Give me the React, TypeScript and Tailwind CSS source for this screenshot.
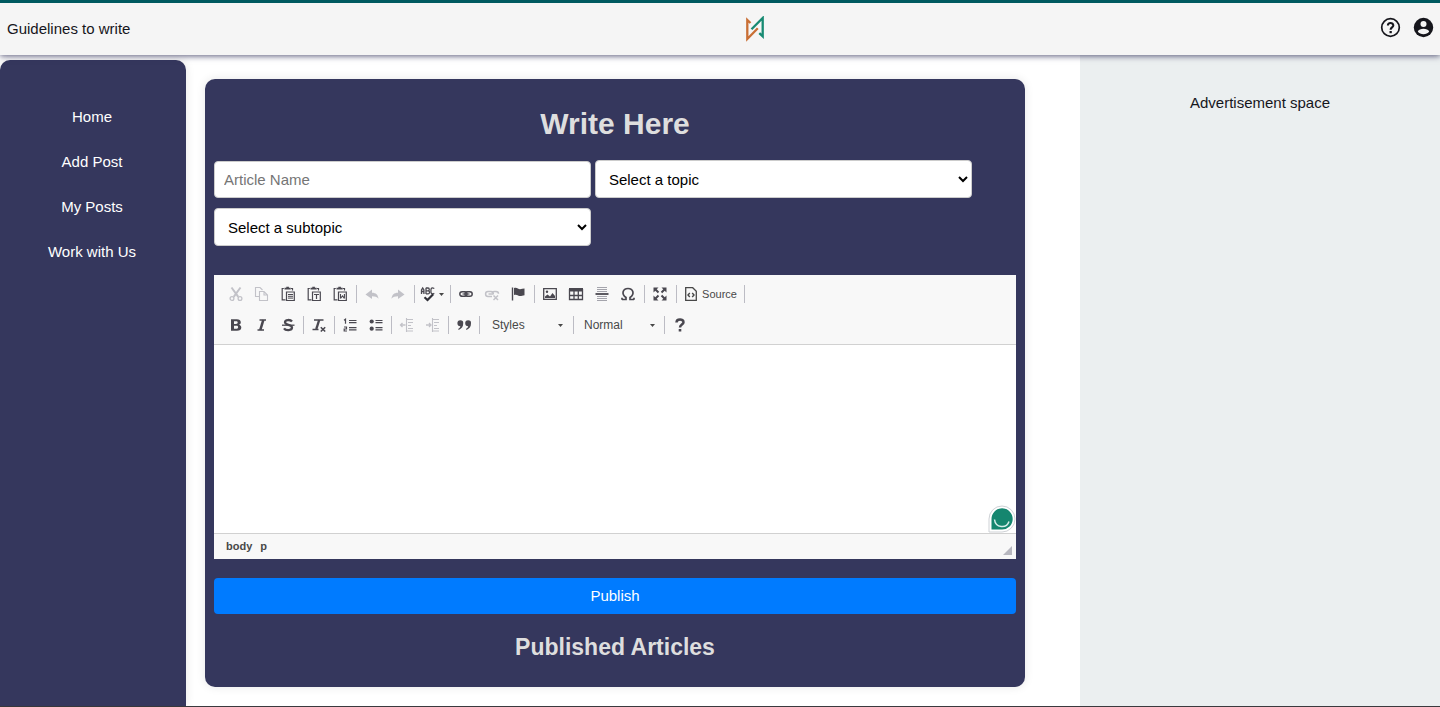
import type { ReactNode } from "react";

const links = ["Home", "Add Post", "My Posts", "Work with Us"];

function Icon({ children }: { children: ReactNode }) {
  return (
    <svg viewBox="0 0 16 16" className="size-4" fill="none" stroke="currentColor" strokeWidth="1.3" aria-hidden="true">
      {children}
    </svg>
  );
}

function Tool({ label, disabled, children }: { label: string; disabled?: boolean; children: ReactNode }) {
  return (
    <button
      type="button"
      aria-label={label}
      disabled={disabled}
      className="flex h-6 w-[26px] items-center justify-center text-[#4a4850] disabled:text-[#c2c2c8]"
    >
      <Icon>{children}</Icon>
    </button>
  );
}

function Sep({ wide }: { wide?: boolean }) {
  return (
    <span className={wide ? "flex w-[6px] justify-center" : "flex w-[5px] justify-center"}>
      <span className="h-[18px] w-px bg-[#bcbcc4]" />
    </span>
  );
}

function Caret() {
  return (
    <svg viewBox="0 0 5 3" className="h-[3px] w-[5px]" fill="#484848" aria-hidden="true">
      <path d="M0 0h5L2.5 3z" />
    </svg>
  );
}

function Clipboard({ children }: { children: ReactNode }) {
  return (
    <>
      <path d="M3.800 2.500H2.200v11.300H5.500M11 2.500h1.500V4.500" strokeWidth="1.200" />
      <path d="M4.500 3.600V1.800h1.800V.8h2.600v1h1.800v1.800z" fill="currentColor" stroke="none" />
      <path d="M6.500 6h7.800v8.500H6.500z" strokeWidth="1.200" />
      {children}
    </>
  );
}

function IndentLines() {
  return <path d="M7 2.500h7M9 5.500h5M9 8.500h3M9 11.500h5M7 14h7M7.500 1v14" strokeWidth="1.100" />;
}

function Toolbar() {
  return (
    <div className="flex flex-col gap-[7px] border-b border-[#d1d1d1] bg-[#f8f8f8] px-[9px] pt-[7px] pb-[7px]">
      <div className="flex items-center">
        <Tool label="Cut" disabled>
          <path d="M3.500 1.500l6.800 9.300M12.500 1.500L5.700 10.800" strokeWidth="2" />
          <circle cx="4" cy="12.500" r="1.900" />
          <circle cx="12" cy="12.500" r="1.900" />
        </Tool>
        <Tool label="Copy" disabled>
          <path d="M5 10.500H1.500v-9h4.500l2.500 2.500" strokeWidth="1.100" />
          <path d="M5.500 5.500h4.500l3.500 3.500v5.500H5.500z M10 5.500V9H13.500" strokeWidth="1.100" />
        </Tool>
        <Tool label="Paste">
          <Clipboard>
            <path d="M8 8.500h5M8 10.300h5M8 12.100h5" strokeWidth="1" />
          </Clipboard>
        </Tool>
        <Tool label="Paste as plain text">
          <Clipboard>
            <path d="M8 8.500h5M10.500 8.500V13" strokeWidth="1.200" />
          </Clipboard>
        </Tool>
        <Tool label="Paste from Word">
          <Clipboard>
            <path d="M8.500 8v4.500M12.400 8v4.500M8.500 12.500l2-2.500 1.900 2.500" strokeWidth="1.100" />
          </Clipboard>
        </Tool>
        <Sep wide />
        <Tool label="Undo" disabled>
          <path d="M1.500 8.500L8 3.500v3.300c4 0 6 2 6.500 6C13 11 11 10.300 8 10.300V13z" fill="currentColor" stroke="none" />
        </Tool>
        <Tool label="Redo" disabled>
          <path d="M14.500 8.500L8 3.500v3.300c-4 0-6 2-6.500 6C3 11 5 10.300 8 10.300V13z" fill="currentColor" stroke="none" />
        </Tool>
        <Sep wide />
        <button
          type="button"
          aria-label="Spell check as you type"
          className="flex h-6 w-[30px] items-center justify-center gap-[3px] text-[#4a4850]"
        >
          <Icon>
            <path d="M1.500 8V4L2.700 2l1.200 2v4M1.500 5.500h2.400M6 1.800V8M6 2h2c1.700 0 1.700 2.800 0 2.800H6h2.200c1.800 0 1.800 3 0 3H6M14.300 2.500c-3-1.500-3.400 0-3.400 2.500s.6 3.700 3.400 2.300" />
            <path d="M4.500 11.300l3 2.700 5.700-5.700" strokeWidth="2.200" stroke="#303038" />
          </Icon>
          <Caret />
        </button>
        <Sep wide />
        <Tool label="Link">
          <rect x="1.800" y="5.700" width="7.200" height="4.600" rx="2.300" strokeWidth="1.500" />
          <rect x="7" y="5.700" width="7.200" height="4.600" rx="2.300" strokeWidth="1.500" />
          <path d="M4.500 8h7" strokeWidth="1.100" />
        </Tool>
        <Tool label="Unlink" disabled>
          <path d="M8 10.500H4C.8 10.500.8 5.500 4 5.500h3c2 0 2.500 1.500 2.200 2.500M8 7c.5-1.200 1.200-1.500 2-1.500h2c1.600 0 2.500 1 2.500 2.300M4.500 8h5" strokeWidth="1.500" />
          <path d="M9.500 9.500l4.500 4.500M14 9.500L9.500 14" strokeWidth="1.500" />
        </Tool>
        <Tool label="Anchor">
          <path d="M2.500 1.500v13" strokeWidth="1.400" />
          <path d="M4 2c3-1.200 4 1.200 6 1.200 1.500 0 3-.7 4.500-.7v6.800c-2 .3-3.500.9-5 .7C7.500 9.700 7 8 4 9z" fill="currentColor" stroke="none" />
        </Tool>
        <Sep wide />
        <Tool label="Image">
          <path d="M1.700 2.700h12.600v10.600H1.700z" strokeWidth="1.300" />
          <path d="M3 12V10.500l2.500-2L8 10.500l2.500-3.500L13 10v2z" fill="currentColor" stroke="none" />
          <circle cx="5" cy="5.800" r="1.200" fill="currentColor" stroke="none" />
        </Tool>
        <Tool label="Table">
          <path d="M1.500 3v10.500h13V3M1.500 9.500h13M6 4v9.500M10.300 4v9.500" />
          <path d="M1 2h14v3.500H1z" fill="currentColor" stroke="none" />
        </Tool>
        <Tool label="Insert horizontal line">
          <path d="M3 1.500h10M3 3.500h10M3 5.500h10M3 10.500h10M3 12.500h10M3 14.500h10" stroke="#a4a4ac" strokeWidth="1" />
          <path d="M1.500 8h13" strokeWidth="1.800" />
        </Tool>
        <Tool label="Insert special character">
          <path d="M2 13.500h4v-2C1 8 2.700 2.500 8 2.500s7 5.500 2 9v2h4M2 13.800v-2M14 13.800v-2" strokeWidth="1.700" />
        </Tool>
        <Sep wide />
        <Tool label="Maximize">
          <path d="M3 3l3.500 3.500M13 3L9.500 6.500M3 13l3.500-3.500M13 13L9.500 9.500" strokeWidth="2" />
          <path d="M1.500 1.500h5l-5 5zM14.500 1.500v5l-5-5zM1.500 14.500v-5l5 5zM14.500 14.500h-5l5-5z" fill="currentColor" stroke="none" />
        </Tool>
        <Sep wide />
        <button type="button" className="flex h-6 w-[62px] items-center justify-center gap-[3px] text-[11px] text-[#484848]">
          <Icon>
            <path d="M2.700 1.700h7l3.600 3.600v9H2.700z" />
            <path d="M6.800 7L5 9l1.800 2M9.200 7L11 9l-1.800 2" strokeWidth="1.400" />
          </Icon>
          Source
        </button>
        <Sep wide />
      </div>
      <div className="flex items-center">
        <Tool label="Bold">
          <path
            d="M3 2.300h5.800c2.500 0 4 1 4 2.900 0 1.300-.8 2.200-2 2.500 1.500.3 2.500 1.300 2.500 2.800 0 2.100-1.700 3.200-4.300 3.200H3zM6 4.300v2.600h2c1.200 0 1.700-.5 1.700-1.300S9.200 4.300 8 4.300zM6 8.800v2.900h2.300c1.300 0 1.800-.6 1.800-1.500s-.6-1.400-1.800-1.400z"
            fill="currentColor"
            fillRule="evenodd"
            stroke="none"
          />
        </Tool>
        <Tool label="Italic">
          <path d="M5.500 3h6.500M3.500 13h6.500" strokeWidth="1.600" />
          <path d="M9.300 3L6.300 13" strokeWidth="2.600" />
        </Tool>
        <Tool label="Strikethrough">
          <path d="M12 4.500C10.500 2.500 5 2.300 5 5.300c0 3 7 2 7 5.200 0 3.300-6.500 3.200-8 .8" strokeWidth="2.300" />
          <path d="M2 8.200h12.500" strokeWidth="1.300" />
        </Tool>
        <Sep />
        <Tool label="Remove format">
          <path d="M3 3h9.500M1.500 12.500h6" strokeWidth="1.600" />
          <path d="M8.200 3L5.300 12" strokeWidth="2.400" />
          <path d="M9.800 10.200l4.400 4.300M14.200 10.200l-4.400 4.300" strokeWidth="1.600" />
        </Tool>
        <Sep />
        <Tool label="Numbered list">
          <path d="M7 3.500h7.500M7 5.700h7.500M7 10.700h7.500M7 12.900h7.500" strokeWidth="1.200" />
          <path d="M2 3.200l1.500-1v4.500M2 10h2.500v2H2.200v2H5" strokeWidth="1.200" />
        </Tool>
        <Tool label="Bulleted list">
          <circle cx="3.700" cy="4.500" r="2.100" fill="currentColor" stroke="none" />
          <circle cx="3.700" cy="11.700" r="2.100" fill="currentColor" stroke="none" />
          <path d="M7.500 3.500h7M7.500 5.700h7M7.500 10.700h7M7.500 12.900h7" strokeWidth="1.200" />
        </Tool>
        <Sep />
        <Tool label="Decrease indent" disabled>
          <IndentLines />
          <path d="M6.500 8H1.500M3.500 6L1.500 8l2 2" />
        </Tool>
        <Tool label="Increase indent" disabled>
          <IndentLines />
          <path d="M1 8h5M4 6l2 2-2 2" />
        </Tool>
        <Sep />
        <Tool label="Block quote">
          <path d="M4.300 3.300a2.900 2.900 0 0 1 2.900 3.200c0 3.200-1.600 5.200-4.500 6.400l-.5-1c1.300-.8 2-1.600 2.200-2.700A2.950 2.950 0 0 1 4.300 3.300zM12.100 3.300a2.900 2.900 0 0 1 2.900 3.200c0 3.200-1.600 5.200-4.500 6.400l-.5-1c1.300-.8 2-1.600 2.200-2.700a2.950 2.950 0 0 1-.1-5.900z" fill="currentColor" stroke="none" />
        </Tool>
        <Sep />
        <button type="button" className="flex h-6 w-[89px] items-center justify-between pr-2 pl-[10px] text-[12px] text-[#484848]">
          Styles
          <Caret />
        </button>
        <Sep />
        <button type="button" className="flex h-6 w-[86px] items-center justify-between pr-[7px] pl-2 text-[12px] text-[#484848]">
          Normal
          <Caret />
        </button>
        <Sep />
        <Tool label="About the editor">
          <path d="M4.500 5.500c0-4 7-4 7-.3C11.500 7.500 8 7.700 8 10.500" strokeWidth="2.500" />
          <path d="M6.700 12h2.600v2.500H6.700z" fill="currentColor" stroke="none" />
        </Tool>
      </div>
    </div>
  );
}

export default function App() {
  return (
    <div className="flex min-h-screen flex-col border-b border-[#3a3a3e] bg-white font-['Liberation_Sans',Arial,sans-serif] text-[15px] text-[#16161c]">
      <header className="z-10 flex h-[55px] items-center justify-between border-t-[3px] border-[#005a60] bg-[#f5f5f5] pr-[6px] pl-[7px] shadow-[0_1px_6px_rgba(50,50,90,0.8)]">
        <a href="#guidelines">Guidelines to write</a>
        <a href="#home" aria-label="Home page">
          <svg viewBox="0 0 20 26" className="h-[26px] w-5" fill="none" strokeWidth="2.300" aria-hidden="true">
            <path d="M5.500 7L2.300 4V23L12.800 12.200" stroke="#c96f35" />
            <path d="M14.300 17.200l3.400 3.200V2L6.500 13.300" stroke="#178a72" />
          </svg>
        </a>
        <div className="flex gap-3 pb-1">
          <button type="button" aria-label="Help">
            <svg viewBox="0 0 21 21" className="size-[21px]" fill="none" stroke="currentColor" aria-hidden="true">
              <circle cx="10.500" cy="10.500" r="8.800" strokeWidth="1.700" />
              <path d="M7.900 8.500c0-3.300 5.400-3.300 5.400 0 0 1.800-2.700 2-2.700 4.200" strokeWidth="2.100" />
              <path d="M9.500 14h2.300v2.200H9.500z" fill="currentColor" stroke="none" />
            </svg>
          </button>
          <button type="button" aria-label="Account">
            <svg viewBox="0 0 21 21" className="size-[21px]" aria-hidden="true">
              <circle cx="10.500" cy="10.500" r="9.700" fill="currentColor" />
              <circle cx="10.500" cy="7" r="3" fill="#f5f5f5" />
              <path d="M4.800 14.500c1.400-3.800 10-3.800 11.400 0-2.500 3.500-8.900 3.500-11.400 0z" fill="#f5f5f5" />
            </svg>
          </button>
        </div>
      </header>

      <div className="flex flex-1">
        <nav className="mt-[5px] w-[186px] shrink-0 rounded-t-[10px] bg-[#35375d] pt-[45px] pr-[2px] text-center text-white shadow-[0_0_10px_rgba(0,0,0,0.1)]">
          <ul className="flex flex-col gap-[21px]">
            {links.map((name) => (
              <li key={name} className="leading-6">
                <a href="#">{name}</a>
              </li>
            ))}
          </ul>
        </nav>

        <main className="min-w-0 flex-1 pt-6 pr-[55px] pb-[19px] pl-[19px]">
          <form className="rounded-[10px] bg-[#35375d] px-[9px] pt-[25px] pb-6 shadow-[0_0_10px_rgba(0,0,0,0.1)]">
            <h1 className="text-center text-[30px] leading-10 font-bold text-[#dedede]">Write Here</h1>
            <div className="mt-4 flex flex-wrap items-end gap-x-1 gap-y-[10px]">
              <input
                type="text"
                aria-label="Article name"
                placeholder="Article Name"
                className="h-[37px] w-[47%] rounded border border-[#ccc] bg-white px-[9px] placeholder:text-[#757575]"
              />
              <select aria-label="Topic" className="h-[38px] w-[47%] rounded border border-[#ccc] bg-white px-[9px] text-black">
                <option>Select a topic</option>
              </select>
              <select aria-label="Subtopic" className="h-[38px] w-[47%] rounded border border-[#ccc] bg-white px-[9px] text-black">
                <option>Select a subtopic</option>
              </select>
            </div>

            <div className="mt-[29px] bg-white">
              <Toolbar />
              <div className="relative">
                <textarea aria-label="Article text" className="block h-[188px] w-full resize-none p-5 text-sm outline-none" />
                <svg viewBox="0 0 28 28" className="absolute right-0 bottom-0 size-7" aria-hidden="true">
                  <path d="M1 27V14a13 13 0 1 1 13 13z" fill="#fff" stroke="#cfd2d6" />
                  <path d="M3.500 24.500V14A10.600 10.600 0 1 1 14 24.500z" fill="#15866f" />
                  <path d="M6.500 14.500c1 8.500 12 9.500 14.500 2" fill="none" stroke="#d6eeea" strokeWidth="1.500" />
                </svg>
              </div>
              <div className="flex h-[26px] items-center justify-between border-t border-[#d1d1d1] bg-[#f8f8f8] pr-1 pl-3 text-[11px] font-bold text-[#484848]">
                <div className="flex gap-2">
                  <span>body</span>
                  <span>p</span>
                </div>
                <svg viewBox="0 0 9 9" className="mt-2 size-[9px]" fill="#b8b8c0" aria-hidden="true">
                  <path d="M9 0v9H0z" />
                </svg>
              </div>
            </div>

            <button type="button" className="mt-[19px] h-9 w-full rounded bg-[#007bff] text-white">Publish</button>
            <h2 className="mt-[17px] text-center text-[23px] leading-8 font-bold text-[#dedede]">Published Articles</h2>
          </form>
        </main>

        <aside className="w-1/4 bg-[#ebeff0] pt-9 text-center">
          <p className="leading-6">Advertisement space</p>
        </aside>
      </div>
    </div>
  );
}
